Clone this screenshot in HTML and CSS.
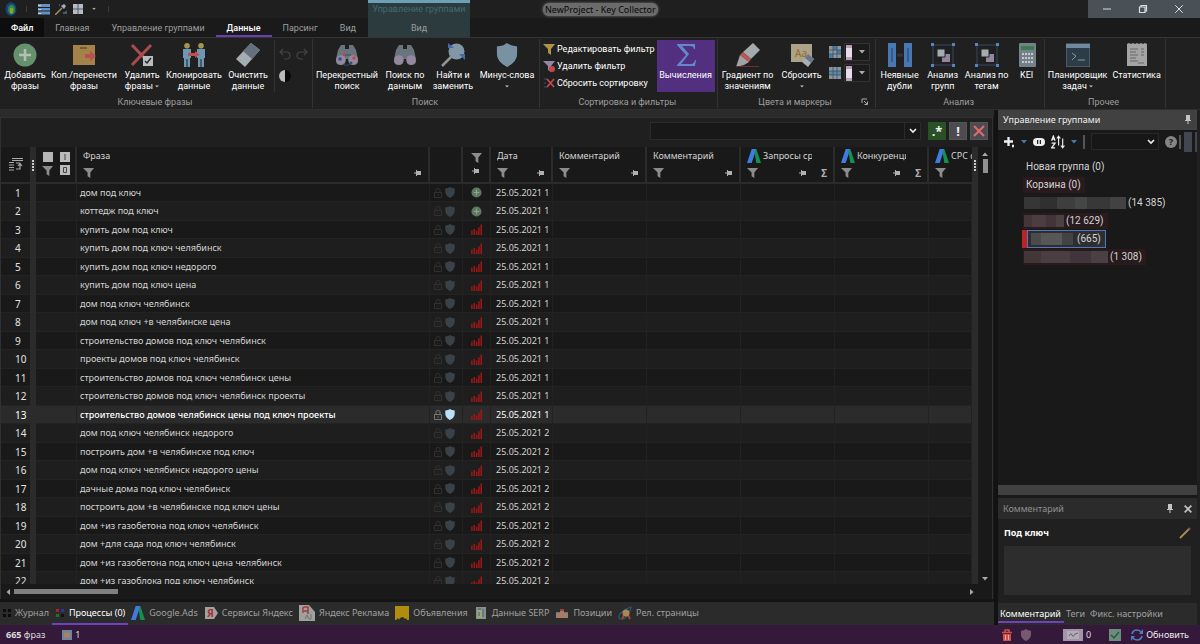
FILE: index.html
```html
<!DOCTYPE html>
<html lang="ru">
<head>
<meta charset="utf-8">
<title>NewProject - Key Collector</title>
<link rel="stylesheet" href="styles.css">
</head>
<body>
<svg class="defs" aria-hidden="true">
  <symbol id="funnel" viewBox="0 0 12 12"><path d="M0 1h12L8 6v6L5 10V6z"/></symbol>
  <symbol id="pin-side" viewBox="0 0 8 8"><path d="M0 3.500h2V1h1v1h4v4H3v1H2V4.500H0z"/></symbol>
  <symbol id="pin-down" viewBox="0 0 8 10"><path d="M2 0h4v5h1v1H4.500v3h-1V6H1V5h1z"/></symbol>
  <symbol id="dots" viewBox="0 0 6 12"><path d="M2 0h2v2H2zM2 3h2v2H2zM2 6h2v2H2zM2 9h2v2H2z"/></symbol>
  <symbol id="shield" viewBox="0 0 12 14"><path d="M6 0Q8 1.800 12 2v4q0 5-6 8Q0 11 0 6V2Q4 1.800 6 0z"/></symbol>
  <symbol id="lock" viewBox="0 0 8 10"><path d="M2 4V2q0-1.500 2-1.500T6 2v2M.5 4.500h7v5h-7zM4 6.300v1.500" fill="none" stroke="currentColor"/></symbol>
  <symbol id="added" viewBox="0 0 12 12"><circle cx="6" cy="6" r="5.500" fill="#5c7860"/><path d="M6 3v6M3 6h6" stroke="#8fa392" stroke-width="1.300"/></symbol>
  <symbol id="bars" viewBox="0 0 10 10"><path d="M.8 10V6M3 10V4.500M5.200 10V6M7.200 10V3M9.300 10V.5" stroke="#9c1717" stroke-width="1.400"/></symbol>
  <symbol id="ads" viewBox="0 0 12 12"><path d="M4 0h4L4 12H0z" fill="#3f7be0"/><path d="M6.500 3L8 0l4 12H8z" fill="#139150"/></symbol>
  <symbol id="down" viewBox="0 0 6 4"><path d="M0 0h6L3 3.500z"/></symbol>
  <symbol id="chev" viewBox="0 0 8 6"><path d="M1 1l3 3 3-3" fill="none" stroke="currentColor" stroke-width="1.600"/></symbol>
  <symbol id="cross" viewBox="0 0 12 12"><path d="M1 1l10 10M11 1L1 11" fill="none" stroke="currentColor" stroke-width="2"/></symbol>
  <symbol id="binoc" viewBox="0 0 24 24"><path d="M6 2h4v4h4V2h4l3 5 2 9q1 6-5 6-4 0-4-4v-2h-4v2q0 4-4 4-6 0-5-6l2-9z" fill="#69747c"/><circle cx="6" cy="17" r="4.800" fill="#9388a0"/><circle cx="18" cy="17" r="4.800" fill="#9388a0"/></symbol>
  <symbol id="nested" viewBox="0 0 24 24"><path d="M2 2h20v20H2z" fill="none" stroke="#36475c"/><path d="M0 0h3v3H0zM21 0h3v3h-3zM0 21h3v3H0zM21 21h3v3h-3z" fill="#5584c4"/><path d="M11 11h8v8h-8z" fill="#9185a3"/><path d="M6 6h8v8H6z" fill="#a3adb0" stroke="#222"/></symbol>
</svg>

<header class="top">
  <div class="quick">
    <svg class="app-logo" viewBox="0 0 12 14"><ellipse cx="6" cy="7" rx="5.500" ry="6.800" fill="#18427e"/><ellipse cx="6.500" cy="7.500" rx="3.500" ry="4.800" fill="#2b8750"/><ellipse cx="6.500" cy="8.500" rx="1.800" ry="3" fill="#8ba626"/></svg>
    <span class="tick"></span>
    <button class="bare" aria-label="Список"><svg class="i12" viewBox="0 0 12 12"><path d="M0 1h12v3H0zM0 5h12v2.500H0zM0 8.500h12v3H0z" fill="#6791c2"/><path d="M0 2h3v1H0zM0 6h3v1H0zM0 10h3v1H0z" fill="#ccc"/></svg></button>
    <button class="bare" aria-label="Мастер"><svg class="i12" viewBox="0 0 12 12"><path d="M0 12L7 5" stroke="#a78f62" stroke-width="1.500"/><path d="M6 3l3-2 2 2-2 3z" fill="#9fb0c4"/><path d="M8 10h2M11 8v3M4 2h1" stroke="#6d91c0"/></svg></button>
    <button class="bare" aria-label="Окна"><svg class="i12" viewBox="0 0 12 12"><path d="M1 1h10v10H1z" fill="#b7bcc4"/><path d="M6 1v10M1 6h10" stroke="#4e5a6c"/></svg></button>
    <button class="bare more" aria-label="Ещё"><svg class="caret" viewBox="0 0 6 4"><use href="#down"/></svg></button>
    <span class="tick"></span>
  </div>
  <nav class="tabs">
    <a class="tab file" href="#">Файл</a><a class="tab" href="#">Главная</a><a class="tab" href="#">Управление группами</a><a class="tab on" href="#">Данные</a><a class="tab" href="#">Парсинг</a><a class="tab" href="#">Вид</a>
  </nav>
  <div class="context"><span class="context-name">Управление группами</span><a class="context-tab" href="#">Вид</a></div>
  <div class="titlebar">
    <h1 class="title">NewProject - Key Collector</h1>
    <div class="window-buttons">
      <button class="bare" aria-label="Свернуть"><svg class="i10" viewBox="0 0 10 10"><path d="M1 5h8" stroke="#ddd"/></svg></button>
      <button class="bare" aria-label="Развернуть"><svg class="i10" viewBox="0 0 10 10"><path d="M1.500 3h5.500v5.500H1.500zM3 3V1.500h5.500V7H7" fill="none" stroke="#ddd" stroke-width="1.200"/></svg></button>
      <button class="bare" aria-label="Закрыть"><svg class="i10" viewBox="0 0 12 12"><path d="M1.500 1.500l9 9M10.500 1.500l-9 9" stroke="#ddd" stroke-width="1.200"/></svg></button>
    </div>
  </div>
</header>

<section class="ribbon">
  <div class="group">
    <div class="tools">
      <button class="big w50"><svg class="i24" viewBox="0 0 24 24"><circle cx="12" cy="12" r="11.500" fill="#65926d"/><path d="M12 6v12M6 12h12" stroke="#b6bfb6" stroke-width="2.500"/></svg>Добавить<br>фразы</button>
      <button class="big w68"><svg class="i24" viewBox="0 0 24 24"><path d="M1 2h22v20H1z" fill="#a58247"/><path d="M8 5h7" stroke="#443820"/><path d="M13 11h5V8l6 5-6 5v-3h-5z" fill="#b94f55"/></svg>Коп./перенести<br>фразы</button>
      <button class="big w48"><svg class="i24" viewBox="0 0 24 24"><path d="M2 2l19 20M21 2L2 22" stroke="#a94c4f" stroke-width="3"/><path d="M13 13h10v10H13z" fill="#b9bdbd"/><path d="M15 18l2 2 4-5" fill="none" stroke="#222" stroke-width="1.300"/></svg><span>Удалить<br>фразы <svg class="mini" viewBox="0 0 6 4"><use href="#down"/></svg></span></button>
      <button class="big w56"><svg class="i24" viewBox="0 0 24 24"><circle cx="5" cy="2.800" r="2.800" fill="#a7954e"/><circle cx="19" cy="2.800" r="2.800" fill="#a7954e"/><path d="M1 6h8v9H8v9H5.500v-8h-1v8H2v-9H1zM15 6h8v9h-1v9h-2.500v-8h-1v8H16v-9h-1z" fill="#6d98b4"/><path d="M6 10h7V8l5 3.500-5 3.500v-2H6z" fill="#bd4f53"/></svg>Клонировать<br>данные</button>
      <button class="big w52"><svg class="i24" viewBox="0 0 24 24"><path d="M15 0l9 7L9 24 0 16z" fill="#a5adb2"/><path d="M15 0l9 7-8 9-9-8z" fill="#65707d"/></svg>Очистить<br>данные</button>
      <div class="undo">
        <button class="bare" aria-label="Отменить"><svg class="i12" viewBox="0 0 12 12"><path d="M4 1L1 4l3 3M1 4h6q4 0 4 3.500T7 11H5" fill="none" stroke="#444" stroke-width="1.200"/></svg></button>
        <button class="bare" aria-label="Повторить"><svg class="i12" viewBox="0 0 12 12"><path d="M8 1l3 3-3 3M11 4H5Q1 4 1 7.500T5 11h2" fill="none" stroke="#444" stroke-width="1.200"/></svg></button>
        <button class="bare" aria-label="Инвертировать"><svg class="i12" viewBox="0 0 12 12"><circle cx="6" cy="6" r="6" fill="#080808"/><path d="M6 0a6 6 0 0 0 0 12z" fill="#b9b9b9"/></svg></button>
      </div>
    </div>
    <div class="caption">Ключевые фразы</div>
  </div>
  <div class="group">
    <div class="tools">
      <button class="big w68"><svg class="i24" viewBox="0 0 24 24"><use href="#binoc"/><path d="M8 12h8M8 21q4 3 8-1" stroke="#394a6a" fill="none"/><g fill="#c0494d"><circle cx="9" cy="11" r="1.500"/><circle cx="19" cy="15" r="1.800"/></g><g fill="#354b84"><circle cx="5" cy="16" r="1.800"/><circle cx="16" cy="20" r="1.500"/></g></svg>Перекрестный<br>поиск</button>
      <button class="big w48"><svg class="i24"><use href="#binoc"/></svg>Поиск по<br>данным</button>
      <button class="big w48"><svg class="i24" viewBox="0 0 24 24"><path d="M1 23l10-10" stroke="#8f9597" stroke-width="2.500"/><circle cx="15.500" cy="8.500" r="8" fill="#8297a5"/><path d="M7 0v5h6zM24 17v-6h-6z" fill="#4569ab"/></svg>Найти и<br>заменить</button>
      <button class="big w60"><svg class="i24" viewBox="0 0 12 14"><use href="#shield" fill="#7892a4"/></svg><span>Минус-слова<br><svg class="mini" viewBox="0 0 6 4"><use href="#down"/></svg></span></button>
    </div>
    <div class="caption">Поиск</div>
  </div>
  <div class="group">
    <div class="tools">
      <div class="stack">
        <button class="small"><svg class="i12" fill="#b09149"><use href="#funnel"/></svg>Редактировать фильтр</button>
        <button class="small"><svg class="i12" viewBox="0 0 12 12" fill="#9186a5"><use href="#funnel"/><circle cx="9" cy="9" r="3" fill="#c5474b"/></svg>Удалить фильтр</button>
        <button class="small"><svg class="i12" viewBox="0 0 12 12"><path d="M1 2h3M1 6h2M1 10h3" stroke="#384f6d"/><path d="M4 2l7 8M11 2l-7 8" stroke="#c34b4b" stroke-width="1.700"/></svg>Сбросить сортировку</button>
      </div>
      <button class="big w58 calc"><svg class="i24" viewBox="0 0 24 24"><path d="M3 1h18v5h-1q-.5-3-4-3H8l7 8-8 10h10q3 0 4-4h1l-1 6H3v-1l9-10-9-10z" fill="#6488cb"/></svg>Вычисления</button>
    </div>
    <div class="caption">Сортировка и фильтры</div>
  </div>
  <div class="group">
    <div class="tools">
      <button class="big w60"><svg class="i24" viewBox="0 0 24 24"><path d="M17 0l7 7-9 9-8-7z" fill="#a2aaae"/><path d="M7 9l8 7-2 3-9-7z" fill="#bd5555"/><path d="M4 12l9 7-5 3-8 2z" fill="#a2a2a5"/><path d="M0 23.500h23" stroke="#682e31"/></svg>Градиент по<br>значениям</button>
      <button class="big w48"><svg class="i24" viewBox="0 0 24 24"><path d="M1 1h21v18H1z" fill="#aaa386"/><text class="aa" x="5" y="14">Aa</text><path d="M18 11l6 5-6 8-6-5z" fill="#a9b1b5"/><path d="M18 11l6 5-3 4-6-5z" fill="#68778b"/></svg><span>Сбросить<br><svg class="mini" viewBox="0 0 6 4"><use href="#down"/></svg></span></button>
      <div class="markers">
        <svg class="i12" viewBox="0 0 12 12"><path d="M0 0h12v12H0z" fill="#8c949c"/><path d="M4 0h4v4h4v4H8V4H4zM0 8h4v4H0z" fill="#4b7dab"/><path d="M4 0v12M8 0v12M0 4h12M0 8h12" stroke="#33495c" stroke-width=".7"/></svg><button class="swatch" aria-label="Цвет ячейки"><span class="chip"></span><svg class="caret" viewBox="0 0 6 4"><use href="#down"/></svg></button>
        <svg class="i12" viewBox="0 0 12 12"><path d="M0 0h12v12H0z" fill="#8c949c"/><path d="M0 4h12v4H0z" fill="#568aae"/><path d="M4 0v12M8 0v12M0 4h12M0 8h12" stroke="#33495c" stroke-width=".7"/></svg><button class="swatch" aria-label="Цвет строки"><span class="chip"></span><svg class="caret" viewBox="0 0 6 4"><use href="#down"/></svg></button>
      </div>
    </div>
    <div class="caption with-launcher"><span>Цвета и маркеры</span><svg class="launcher" viewBox="0 0 8 8"><path d="M1 5V1h5M3 3l3 3M6.500 3.500v3h-3" fill="none" stroke="#aaa"/></svg></div>
  </div>
  <div class="group">
    <div class="tools">
      <button class="big w48"><svg class="i24" viewBox="0 0 24 24"><path d="M0 0h8v24H0zM16 0h8v24h-8z" fill="#4878b1"/><path d="M4 5v14M20 5v14" stroke="#223d62"/><path d="M9 12h6" stroke="#333" stroke-width="3"/></svg>Неявные<br>дубли</button>
      <button class="big w36"><svg class="i24"><use href="#nested"/></svg>Анализ<br>групп</button>
      <button class="big w50"><svg class="i24"><use href="#nested"/></svg>Анализ по<br>тегам</button>
      <button class="big w30"><svg class="i24" viewBox="0 0 24 24"><rect x="4" width="17" height="24" rx="1" fill="#74818b"/><path d="M6 3h13v4H6z" fill="#3d7a4d"/><path d="M7 11h11M7 15h11M7 19h11" stroke="#c3c8c8" stroke-width="2" stroke-dasharray="2 1"/></svg>KEI</button>
    </div>
    <div class="caption">Анализ</div>
  </div>
  <div class="group">
    <div class="tools">
      <button class="big w66"><svg class="i24" viewBox="0 0 24 24"><path d="M0 1h24v23H0z" fill="#2d3c49" stroke="#647887"/><path d="M0 1h24v4H0z" fill="#7189a0"/><path d="M6 10l4 3-4 4M12 17h7" fill="none" stroke="#8c9b9a"/></svg><span>Планировщик<br>задач <svg class="mini" viewBox="0 0 6 4"><use href="#down"/></svg></span></button>
      <button class="big w52"><svg class="i24" viewBox="0 0 24 24"><path d="M2 1l2-1 2 1 2-1 2 1 2-1 2 1 2-1 2 1 2-1 2 1v22H2z" fill="#a4a4a4"/><path d="M5 6h8M5 9h6M5 12h8M5 15h6M5 18h8M16 6h3M16 9h3M16 12h3M13 20h6" stroke="#666"/></svg>Статистика</button>
    </div>
    <div class="caption">Прочее</div>
  </div>
</section>

<main class="workspace">
  <section class="data">
    <div class="sheet">
      <div class="search">
        <div class="combo"><input class="query" type="text" aria-label="Поиск по фразам"><button class="bare open" aria-label="История"><svg class="chev"><use href="#chev"/></svg></button></div>
        <button class="square regex" aria-label="Регулярное выражение">.*</button>
        <button class="square" aria-label="Исключить">!</button>
        <button class="square clear" aria-label="Очистить"><svg class="i12"><use href="#cross"/></svg></button>
      </div>
      <div class="grid-area">
        <div class="grid-view">
          <table class="grid">
            <colgroup><col class="c-num"><col class="c-grip"><col class="c-check"><col class="c-phrase"><col class="c-lock"><col class="c-state"><col class="c-date"><col class="c-wide"><col class="c-wide"><col class="c-wide"><col class="c-wide"><col class="c-cpc"><col class="c-grip"></colgroup>
            <thead><tr>
              <th class="num"><svg class="i14" viewBox="0 0 14 14"><path d="M3 1.500h11M3 3.500h11M0 5.500h5M0 8h5M0 10.500h5M0 13h5M7 6h4" stroke="#aaa"/><path d="M7 12h4V7M9 9l2-2.500L13 9" fill="none" stroke="#aaa" stroke-width="1.200"/></svg></th>
              <th class="grip"><svg class="dots"><use href="#dots"/></svg></th>
              <th><div class="marks"><svg class="i12" viewBox="0 0 12 12"><path d="M1 1h10v10H1z" fill="#b5b5b5"/></svg><svg class="i12" viewBox="0 0 12 12"><path d="M1 1h10v10H1z" fill="#bbb"/><path d="M6 3v6" stroke="#444"/></svg><svg class="funnel"><use href="#funnel"/></svg><svg class="i12" viewBox="0 0 12 12"><path d="M1 1h10v10H1z" fill="#bbb"/><path d="M4.500 3.500h3v5h-3z" fill="none" stroke="#444"/></svg></div></th>
              <th><div class="head"><span class="name">Фраза</span><span class="head-tools"><svg class="funnel"><use href="#funnel"/></svg><svg class="pin"><use href="#pin-side"/></svg></span></div></th>
              <th></th>
              <th><div class="head mid"><svg class="funnel"><use href="#funnel"/></svg><svg class="pin"><use href="#pin-side"/></svg></div></th>
              <th><div class="head"><span class="name">Дата</span><span class="head-tools"><svg class="funnel"><use href="#funnel"/></svg><svg class="pin"><use href="#pin-side"/></svg></span></div></th>
              <th><div class="head"><span class="name">Комментарий</span><span class="head-tools"><svg class="funnel"><use href="#funnel"/></svg><svg class="pin"><use href="#pin-side"/></svg></span></div></th>
              <th><div class="head"><span class="name">Комментарий</span><span class="head-tools"><svg class="funnel"><use href="#funnel"/></svg><svg class="pin"><use href="#pin-side"/></svg></span></div></th>
              <th><div class="head"><span class="name"><svg class="i14"><use href="#ads"/></svg><span class="cut">Запросы средние</span></span><span class="head-tools"><svg class="funnel"><use href="#funnel"/></svg><svg class="pin"><use href="#pin-side"/></svg><b>Σ</b></span></div></th>
              <th><div class="head"><span class="name"><svg class="i14"><use href="#ads"/></svg><span class="cut">Конкуренция</span></span><span class="head-tools"><svg class="funnel"><use href="#funnel"/></svg><svg class="pin"><use href="#pin-side"/></svg><b>Σ</b></span></div></th>
              <th class="cpc"><div class="head"><span class="name"><svg class="i14"><use href="#ads"/></svg><span class="cut">CPC с</span></span><span class="head-tools"><svg class="funnel"><use href="#funnel"/></svg></span></div></th>
              <th class="grip"><svg class="dots"><use href="#dots"/></svg></th>
            </tr></thead>
            <tbody id="rows"></tbody>
          </table>
        </div>
        <div class="vscroll"><svg class="caret up" viewBox="0 0 6 4"><use href="#down"/></svg><span class="vthumb"></span><svg class="caret" viewBox="0 0 6 4"><use href="#down"/></svg></div>
      </div>
      <div class="hscroll"><svg class="caret left" viewBox="0 0 6 4"><use href="#down"/></svg><span class="hthumb"></span><svg class="caret right" viewBox="0 0 6 4"><use href="#down"/></svg></div>
    </div>
    <nav class="views">
      <a class="view" href="#"><svg class="i10" viewBox="0 0 10 10"><path d="M1 1h3v3H1zM6 1h3v3H6zM1 6h3v3H1zM6 6h3v3H6z" fill="#0c0c0c"/></svg>Журнал</a>
      <a class="view on" href="#"><svg class="i10" viewBox="0 0 10 10"><path d="M1 1h3v3H1z" fill="#a81f2b"/><path d="M6 1h3v3H6z" fill="#26379f"/><path d="M1 6h3v3H1z" fill="#187237"/><path d="M6 6h3v3H6z" fill="#111"/></svg>Процессы (0)</a>
      <a class="view" href="#"><svg class="i14"><use href="#ads"/></svg>Google.Ads</a>
      <a class="view" href="#"><svg class="i14" viewBox="0 0 14 14"><path d="M1 1h9l4 6-4 6H1z" fill="#a1a1a1"/><text class="ya" x="3" y="11">Я</text></svg>Сервисы Яндекс</a>
      <a class="view" href="#"><svg class="i16" viewBox="0 0 16 16"><path d="M0 0h10l6 7v9H0z" fill="#a0a0a0"/><path d="M4 8V3q0-1 2-1h3v7M5 6h4" fill="none" stroke="#a23a3a" stroke-width="1.500"/><path d="M6 14l2-4 2 4M12 9v5h-2" fill="none" stroke="#707070"/></svg>Яндекс Реклама</a>
      <a class="view" href="#"><svg class="i14" viewBox="0 0 14 14"><path d="M0 0h14v14h-2l-1-2-1 1-2-2-3 1-1 2-1-2-2 2H0z" fill="#b08d0e"/></svg>Объявления</a>
      <a class="view" href="#"><svg class="i14" viewBox="0 0 14 14"><path d="M2 1h10v12H2z" fill="#85918f"/><path d="M3 4h5v8H3z" fill="#9aa77b"/><path d="M4 3h3M9 3v8M5 6v4" stroke="#4c5d70"/></svg>Данные SERP</a>
      <a class="view" href="#"><svg class="i14" viewBox="0 0 14 14"><path d="M1 6h4V3h4v3h4v6H1z" fill="#a67b67"/><path d="M5 3h4v2H5z" fill="#9c4140"/><path d="M1 6h4v1H1zM9 6h4v1H9z" fill="#4e8085"/></svg>Позиции</a>
      <a class="view" href="#"><svg class="i14" viewBox="0 0 14 14"><path d="M2 13q-3-3 2-7t9-5q-1 7-7 12z" fill="none" stroke="#30577b" stroke-width="1.200"/><path d="M6 9l-2 4M10 9l2 4" stroke="#ad3e38" stroke-width="2"/><circle cx="8" cy="7" r="3.500" fill="#aa8951"/></svg>Рел. страницы</a>
    </nav>
  </section>

  <aside class="dock">
    <section class="groups">
      <div class="dock-head"><h2 class="dock-title">Управление группами</h2><svg class="pin-v"><use href="#pin-down"/></svg></div>
      <div class="dock-tools">
        <button class="bare" aria-label="Добавить группу"><svg class="i12" viewBox="0 0 12 12"><path d="M5.500 1v9M1 5.500h9M9 10h2" stroke="#eee" stroke-width="2.300"/></svg></button>
        <svg class="caret blue" viewBox="0 0 6 4"><use href="#down"/></svg>
        <button class="bare" aria-label="Показать"><svg class="i12" viewBox="0 0 12 12"><rect y="2" width="12" height="8" rx="4" fill="#eee"/><path d="M4 4h4v4H4z" fill="#222"/><path d="M6 3.500v5" stroke="#eee" stroke-width="1.500"/></svg></button>
        <button class="bare" aria-label="Сортировать"><svg class="sort" viewBox="0 0 12 12"><path d="M.5 5L2 1l1.500 4M1 3.500h2M.5 7h3l-3 4h3" fill="none" stroke="#eee" stroke-width="1.100"/><path d="M6.500 9V1.500M5 3l1.500-2L8 3M10 3v7.500M8.500 9l1.500 2 1.500-2" fill="none" stroke="#eee"/></svg></button>
        <svg class="caret blue" viewBox="0 0 6 4"><use href="#down"/></svg>
        <span class="bar"></span>
        <div class="pick"><select class="pick-select" aria-label="Фильтр групп"><option></option></select><svg class="chev"><use href="#chev"/></svg></div>
        <button class="bare help" aria-label="Справка">?</button>
        <span class="bar"></span><span class="handle"></span><span class="handle thin"></span>
      </div>
      <ul class="tree">
        <li class="node"><span class="leaf plain">Новая группа (0)</span></li>
        <li class="node"><span class="leaf">Корзина (0)</span></li>
        <li class="node"><span class="leaf plain"><i class="mosaic m100"></i>(14 385)</span></li>
        <li class="node"><span class="leaf"><i class="mosaic rose m40"></i>(12 629)</span></li>
        <li class="node"><span class="leaf current"><i class="mosaic m44"></i>(665)</span></li>
        <li class="node"><span class="leaf"><i class="mosaic rose m84"></i>(1 308)</span></li>
      </ul>
      <div class="tree-scroll"></div>
    </section>
    <section class="comment">
      <div class="dock-head quiet"><h2 class="dock-title">Комментарий</h2><svg class="pin-v"><use href="#pin-down"/></svg><button class="bare" aria-label="Закрыть панель"><svg class="i8" viewBox="0 0 12 12"><path d="M1 1l10 10M11 1L1 11" stroke="#c4c4c4" stroke-width="2.500"/></svg></button></div>
      <div class="comment-body">
        <div class="comment-line"><label class="group-name" for="note">Под ключ</label><button class="bare" aria-label="Изменить"><svg class="i12" viewBox="0 0 12 12"><path d="M1 11L10 2" stroke="#a4914f" stroke-width="1.800"/><path d="M9.500 2.500L11 1" stroke="#9b4a5c" stroke-width="2"/></svg></button></div>
        <textarea class="note" id="note"></textarea>
      </div>
    </section>
    <nav class="dock-tabs"><a class="dock-tab on" href="#">Комментарий</a><a class="dock-tab" href="#">Теги</a><a class="dock-tab" href="#">Фикс. настройки</a></nav>
  </aside>
</main>

<footer class="status">
  <span class="total"><b>665</b> фраз</span>
  <span class="item"><svg class="i10" viewBox="0 0 10 10"><path d="M0 0h10v10H0z" fill="#71829d"/><path d="M2 2.500h6v5H2z" fill="#a5835f"/></svg>1</span>
  <span class="fill"></span>
  <button class="bare" aria-label="Удалить"><svg class="i12" viewBox="0 0 12 12"><path d="M1 3.500h10M4 3V1h4v2" fill="none" stroke="#cf5148" stroke-width="1.500"/><path d="M2 5h8v7H2z" fill="#cf5148"/><path d="M4.500 6v5M7.500 6v5" stroke="#e9aaa5"/></svg></button>
  <svg class="i12 guard" fill="#76586f" viewBox="0 0 12 14"><use href="#shield"/></svg>
  <span class="item captcha"><svg class="card" viewBox="0 0 20 12"><path d="M0 0h20v12H0z" fill="#9f96a6"/><path d="M4 2h12v8H4z" fill="#b5abba"/><path d="M6 7q2-4 3-1t3-1l3-1" fill="none" stroke="#675b78"/></svg>0</span>
  <svg class="i12 ok" viewBox="0 0 12 12"><path d="M0 0h12v12H0z" fill="#6a8d7c"/><path d="M2 6l3 3 5-6" fill="none" stroke="#315744" stroke-width="1.500"/></svg>
  <button class="bare refresh"><svg class="i12" viewBox="0 0 12 12"><path d="M1 5q1-4 5-4 2.500 0 4.500 2.500M11 7q-1 4-5 4-2.500 0-4.500-2.500" fill="none" stroke="#527bbd" stroke-width="1.700"/><path d="M12 0v5H8zM0 12V7h4z" fill="#527bbd"/></svg>Обновить</button>
</footer>
<script src="app.js"></script>
</body>
</html>
```
FILE: styles.css
```css
* { box-sizing: border-box; }
body {
  margin: 0; height: 100vh; display: flex; flex-direction: column; overflow: hidden;
  background: #191919; color: #d4d4d4;
  font: 9px/12px "Noto Sans", "Open Sans", sans-serif;
}
button, input, select, textarea { font: inherit; color: inherit; margin: 0; border-radius: 0; }
a { color: inherit; text-decoration: none; }
h1, h2 { margin: 0; font: inherit; }
svg { display: block; flex: none; }
svg:not([fill]) { fill: currentColor; }
.defs { position: absolute; width: 0; height: 0; }
.bare { border: 0; padding: 0; background: none; display: flex; align-items: center; justify-content: center; }
.i8 { width: 8px; height: 8px; }
.i10 { width: 10px; height: 10px; }
.i12 { width: 12px; height: 12px; }
.i14 { width: 14px; height: 14px; }
.i16 { width: 16px; height: 16px; }
.i24 { width: 24px; height: 24px; }
.caret { width: 6px; height: 4px; color: #a9a9a9; }
.chev { width: 8px; height: 6px; color: #eee; }

/* Title bar and ribbon tabs */
.top { display: grid; grid-template: 18px 19px / 368px 102px 1fr; background: #1a1a1a; border-bottom: 1px solid #353535; flex: none; }
.quick { display: flex; align-items: center; gap: 5px; padding-left: 5px; background: #1f1f1f; }
.app-logo { width: 12px; height: 14px; }
.tick { width: 1px; height: 6px; background: #3b3b3b; margin: 0 6px 0 4px; }
.more { width: 10px; }
.quick .caret { width: 4px; }
.tabs, .context, .ribbon { font-family: Roboto, "Noto Sans", sans-serif; }
.tabs { grid-row: 2; display: flex; }
.tab { padding: 4px 11px 3px; color: #9e9e9e; white-space: nowrap; }
.tab.file { background: #0d0d0d; color: #fff; font-weight: 500; }
.tab.on { color: #fff; font-weight: 500; border-bottom: 2px solid #6a3cb0; }
.context { grid-area: 1 / 2 / 3 / 3; display: flex; flex-direction: column; align-items: center; background: #2c3b3d; border-top: 3px solid #6ba1b3; color: #416b73; white-space: nowrap; }
.context-tab { color: #9e9e9e; padding-top: 7px; }
.titlebar { grid-column: 3; grid-row: 1; display: flex; justify-content: space-between; background: #1f1f1f; }
.title { margin: 3px 0 2px 73px; height: 13px; padding: 0 2px; border-radius: 6px; background: #6b6b6b; box-shadow: 0 0 3px #777; color: #080808; line-height: 13px; }
.window-buttons { display: flex; gap: 26px; padding: 0 16px 0 14px; background: #495157; }

/* Ribbon */
.ribbon { flex: none; display: flex; background: #202020; border-bottom: 1px solid #2e2e2e; padding-top: 1px; }
.group { border-right: 1px solid #333; padding: 1px 2px 0 0; margin-bottom: 1px; color: #fff; }
.tools { display: flex; align-items: flex-start; height: 56px; }
.caption { text-align: center; color: #9e9e9e; line-height: 12px; }
.with-launcher { display: grid; grid-template-columns: 12px 1fr 12px; align-items: center; }
.with-launcher span { grid-column: 2; }
.launcher { width: 8px; height: 8px; }
.big { border: 0; padding: 3px 0 0; background: none; line-height: 11px; text-align: center; white-space: nowrap; display: block; }
.big > svg { margin: 0 auto 3px; }
.mini { display: inline-block; width: 4px; height: 3px; vertical-align: middle; color: #bbb; }
.w30 { width: 30px; } .w36 { width: 38px; } .w48 { width: 48px; } .w50 { width: 50px; } .w52 { width: 52px; }
.w56 { width: 56px; } .w58 { width: 58px; } .w60 { width: 60px; } .w66 { width: 66px; } .w68 { width: 68px; }
.calc { background: #52307f; height: 52px; padding-bottom: 11px; }
.undo { display: grid; grid-template-columns: 12px 12px; gap: 10px 5px; align-content: start; padding: 8px 2px 0 4px; height: 52px; border-left: 1px solid #333; }
.stack { display: flex; flex-direction: column; gap: 5px; padding: 3px 2px 0 3px; }
.small { display: flex; gap: 2px; align-items: center; padding: 0; border: 0; background: none; line-height: 12px; white-space: nowrap; }
.markers { display: grid; grid-template-columns: 12px 26px; gap: 3px; align-items: center; padding: 3px 3px 0; }
.swatch { display: flex; align-items: center; gap: 7px; height: 18px; padding: 0 1px; background: #1b1b1b; border: 1px solid #333; }
.chip { width: 6px; height: 15px; background: linear-gradient(#b79fb5 20%, #eadbea 20%, #eadbea 80%, #b79fb5 80%); }
.aa { font: 10px "Noto Sans", sans-serif; fill: #98692d; }
.ya { font: bold 10px "Noto Sans", sans-serif; fill: #a33232; }

/* Work area */
.workspace { flex: 1; min-height: 0; display: flex; background: #191919; }
.data { flex: 1; min-width: 0; display: flex; flex-direction: column; border-top: 7px solid #2b2b2b; }
.sheet { flex: 1; min-height: 0; display: flex; flex-direction: column; border: solid #303030; border-width: 1px 1px 0; margin-right: 1px; }
.search { flex: none; display: flex; gap: 3px; align-items: center; height: 29px; padding: 0 4px 4px; justify-content: flex-end; background: #1f1f1f; }
.combo { display: flex; width: 271px; height: 18px; margin-right: 4px; border: 1px solid #2a2a31; background: #181818; }
.query { flex: 1; min-width: 0; border: 0; padding: 0 3px; background: none; }
.open { width: 16px; border-left: 1px solid #2a2a31; }
.square { width: 18px; height: 18px; padding: 0; border: 1px solid #54545a; background: #4b4b50; color: #eee; font: bold 13px/16px "Noto Sans", sans-serif; display: flex; align-items: center; justify-content: center; }
.regex { background: #285225; border-color: #285225; }
.clear { color: #e36b6b; }
.grid-area { flex: 1; min-height: 0; display: flex; }
.grid-view { flex: 1; min-width: 0; overflow: hidden; }
.grid { width: 100%; table-layout: fixed; border-collapse: separate; border-spacing: 0; }
.c-num { width: 29px; } .c-grip { width: 6px; } .c-check { width: 41px; } .c-lock { width: 33px; } .c-state { width: 28px; }
.c-date { width: 62px; } .c-wide { width: 94px; } .c-cpc { width: 43px; }
.grid th { height: 37px; padding: 0 0 2px; font-weight: 400; text-align: left; background: #191919; border-right: 2px solid #2b2b2b; border-bottom: 2px solid #2b2b2b; overflow: hidden; }
.grid th.num { border-right: 0; padding-left: 8px; }
.grid th.grip, .grid td.grip { background: #2b2b2b; border: 0; padding: 0; }
.grid th.cpc { border-right: 0; }
.dots { color: #ccc; width: 6px; height: 12px; }
.marks { display: grid; grid-template-columns: 12px 12px; gap: 1px 5px; padding-left: 6px; align-items: center; }
.funnel { width: 11px; height: 11px; color: #8c8c8c; }
.pin { width: 8px; height: 8px; color: #b0b0b0; }
.head { display: flex; flex-direction: column; gap: 4px; padding: 0 6px; }
.cpc .head { padding-right: 0; }
.head.mid { align-items: center; padding: 0; }
.name { display: flex; align-items: center; gap: 2px; height: 14px; white-space: nowrap; overflow: hidden; }
.cut { overflow: hidden; width: 49px; }
.cpc .cut { width: auto; }
.head-tools { display: flex; align-items: center; justify-content: space-between; height: 11px; }
.head-tools b { color: #b0b0b0; font-size: 10px; }
.head-tools:has(b) .pin { margin-left: 26px; }
.grid td { height: 18px; padding: 0 4px; border-bottom: 1px solid #232323; border-right: 1px solid #222; overflow: hidden; white-space: nowrap; line-height: 16px; }
.grid tr:nth-child(even) td { height: 19px; background: #1e1e1e; }
.grid tr td.grip { background: #2b2b2b; }
.grid td.num { padding: 0 0 0 14px; border-right: 0; font-size: 10px; color: #e4e4e4; }
.grid tr.hot td { background: #2b2b2b; color: #fff; }
.grid td.phrase { padding-left: 3px; }
.hot .phrase { font-weight: 500; }
.grid td.when { padding: 0; }
.when-text { display: block; overflow: hidden; margin: 0 3px 0 5px; }
.flags { display: flex; gap: 3px; align-items: center; color: #303030; }
.flags .lock { width: 8px; height: 10px; }
.flags .shield { width: 10px; height: 11px; color: #3a4249; }
.hot .flags .lock { color: #777; }
.hot .flags .shield { color: #b9e1fb; }
.grid td.state { padding: 0 0 0 8px; }
.state svg { width: 11px; height: 11px; }
.vscroll { width: 14px; display: flex; flex-direction: column; align-items: center; gap: 3px; padding: 5px 0 3px; }
.vscroll .caret:last-child { margin-top: auto; }
.vthumb { width: 5px; height: 14px; background: #909090; }
.up { transform: rotate(180deg); }
.left { transform: rotate(90deg); }
.right { transform: rotate(-90deg); margin: 0 17px 0 auto; }
.hscroll { flex: none; display: flex; align-items: center; height: 15px; padding-left: 4px; gap: 3px; }
.hthumb { width: 104px; height: 5px; background: #808080; }
.views { flex: none; display: flex; height: 26px; border-top: 3px solid #141414; background: #2b2b2b; color: #a0a0a0; }
.view { display: flex; align-items: center; gap: 4px; padding: 0 3px; white-space: nowrap; border-bottom: 2px solid transparent; }
.view:first-child { padding-left: 2px; gap: 3px; }
.view.on { color: #fff; border-color: #7040c0; }

/* Side dock */
.dock { flex: none; width: 206px; display: flex; flex-direction: column; border-left: 4px solid #121212; border-right: 3px solid #202020; }
.groups { flex: 1; min-height: 0; display: flex; flex-direction: column; }
.dock-head { display: flex; align-items: center; gap: 10px; height: 20px; padding: 0 5px; background: #414141; color: #eee; }
.dock-title { flex: 1; }
.dock-head.quiet { background: #2b2b2b; color: #909090; height: 21px; }
.pin-v { width: 8px; height: 10px; color: #c4c4c4; }
.dock-tools { display: flex; align-items: center; gap: 6px; height: 23px; padding-left: 5px; }
.blue { color: #4779ac; }
.sort { width: 14px; height: 14px; }
.bar { width: 2px; height: 14px; background: #555; flex: none; }
.pick { flex: 1; min-width: 0; display: grid; align-items: center; justify-items: end; height: 17px; border: 1px solid #292929; background: #171717; padding-right: 3px; }
.pick > * { grid-area: 1 / 1; }
.pick-select { appearance: none; width: 100%; height: 15px; border: 0; background: none; }
.help { width: 12px; height: 12px; border-radius: 6px; background: #858585; color: #1a1a1a; font-weight: 700; margin-right: -4px; flex: none; }
.handle { width: 8px; height: 20px; background: #414650; margin-left: -3px; flex: none; }
.thin { width: 2px; }
.tree { list-style: none; flex: 1; min-height: 0; margin: 0; padding: 5px 0 0 25px; font: 10px/12px Roboto, "Noto Sans", sans-serif; overflow: hidden; }
.node { height: 18px; display: flex; align-items: center; }
.leaf { display: flex; align-items: center; gap: 2px; height: 16px; padding: 0 4px 0 3px; background: #281a1d; white-space: nowrap; }
.leaf.plain { background: none; }
.leaf:has(.mosaic) { padding-left: 1px; }
.leaf.current { height: 18px; padding-left: 3px; background: #2e2e31; border: 1px solid #4d79b9; gap: 4px; box-shadow: -5px 0 #ba2424; margin-left: 4px; }
.mosaic { height: 12px; background: linear-gradient(90deg, #363636 0 16%, #303030 16% 32%, #3e3e3e 32% 50%, #464646 50% 62%, #383838 62% 84%, #424242 84%); }
.rose { background: linear-gradient(90deg, #443539 0 20%, #4b3d41 20% 55%, #41343a 55% 80%, #4b4043 80%); }
.current .mosaic { background: linear-gradient(90deg, #4b4b4b 0 25%, #575757 25% 75%, #434343 75%); }
.m100 { width: 102px; } .m40 { width: 40px; } .m44 { width: 42px; } .m84 { width: 84px; }
.tree-scroll { height: 10px; background: #414141; }
.comment { margin-top: 3px; background: #202020; }
.comment-body { padding: 6px 6px 8px; }
.comment-line { display: flex; align-items: center; justify-content: space-between; height: 16px; }
.group-name { font-weight: 700; color: #fff; }
.note { display: block; width: 100%; height: 49px; margin-top: 5px; resize: none; border: 0; background: #2d2d2d; padding: 3px; }
.dock-tabs { display: flex; height: 22px; background: #2b2b2b; color: #a0a0a0; }
.dock-tab { padding: 5px 3px 0 2px; border-bottom: 2px solid transparent; height: 20px; white-space: nowrap; }
.dock-tab.on { color: #fff; border-color: #7040c0; }

/* Status bar */
.status { flex: none; display: flex; align-items: center; height: 19px; padding: 0 11px 0 6px; background: #34193b; color: #ddd; }
.total { margin-right: 17px; }
.item { display: flex; align-items: center; gap: 3px; }
.fill { flex: 1; }
.guard { margin-left: 7px; }
.captcha { margin: 0 18px 0 31px; }
.card { width: 20px; height: 12px; }
.ok { margin-right: 10px; }
.refresh { gap: 3px; color: #eee; }
```
FILE: app.js
```js
const phrases = [
  "дом под ключ", "коттедж под ключ", "купить дом под ключ", "купить дом под ключ челябинск",
  "купить дом под ключ недорого", "купить дом под ключ цена", "дом под ключ челябинск",
  "дом под ключ +в челябинске цена", "строительство домов под ключ челябинск",
  "проекты домов под ключ челябинск", "строительство домов под ключ челябинск цены",
  "строительство домов под ключ челябинск проекты", "строительство домов челябинск цены под ключ проекты",
  "дом под ключ челябинск недорого", "построить дом +в челябинске под ключ",
  "дом под ключ челябинск недорого цены", "дачные дома под ключ челябинск",
  "построить дом +в челябинске под ключ цены", "дом +из газобетона под ключ челябинск",
  "дом +для сада под ключ челябинск", "дом +из газобетона под ключ цена челябинск",
  "дом +из газоблока под ключ челябинск"
];
const selected = 12;

document.getElementById("rows").innerHTML = phrases.map((phrase, i) => `
  <tr class="${i === selected ? "hot" : ""}">
    <td class="num">${i + 1}</td><td class="grip"></td><td></td>
    <td class="phrase">${phrase}</td>
    <td><div class="flags"><svg class="lock"><use href="#lock"/></svg><svg class="shield"><use href="#shield"/></svg></div></td>
    <td class="state"><svg><use href="#${i < 2 ? "added" : "bars"}"/></svg></td>
    <td class="when"><span class="when-text">25.05.2021 ${i <= selected ? "1" : "2"}</span></td>
    <td></td><td></td><td></td><td></td><td></td><td class="grip"></td>
  </tr>`).join("");
```
